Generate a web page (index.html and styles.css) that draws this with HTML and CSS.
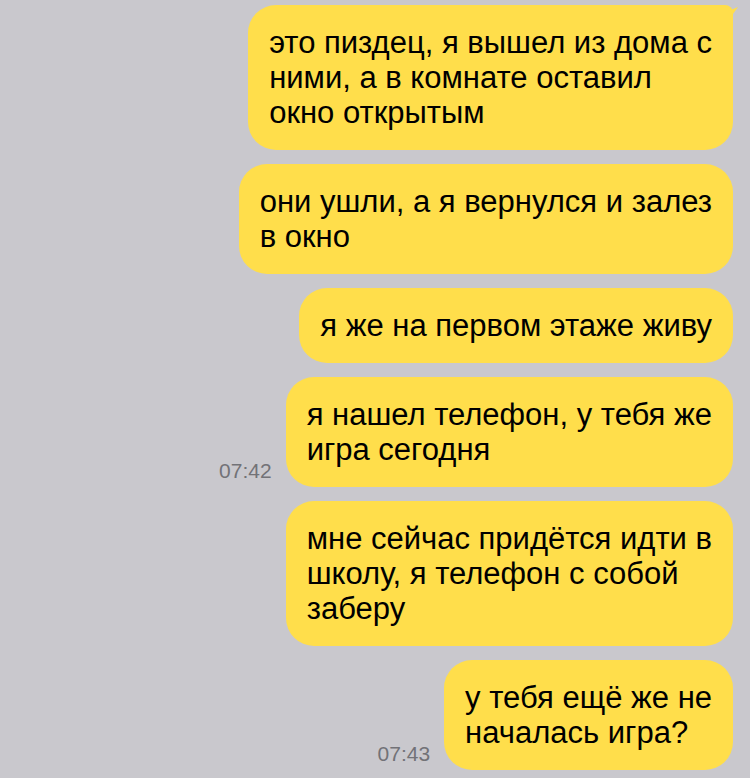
FILE: index.html
```html
<!DOCTYPE html>
<html lang="ru">
<head>
    <meta charset="UTF-8">
    <meta name="viewport" content="width=device-width, initial-scale=1.0">
    <title>Чат</title>
    <link rel="stylesheet" href="styles.css">
</head>
<body>

    <div class="chat">
        <!-- первый пузырь с хвостиком -->
        <div class="row">
            <div class="bubble tail">это пиздец, я вышел из дома с<br>ними, а в комнате оставил<br>окно открытым</div>
        </div>
        <div class="row">
            <div class="bubble">они ушли, а я вернулся и залез<br>в окно</div>
        </div>
        <div class="row">
            <div class="bubble">я же на первом этаже живу</div>
        </div>
        <div class="row">
            <span class="time">07:42</span>
            <div class="bubble">я нашел телефон, у тебя же<br>игра сегодня</div>
        </div>
        <div class="row">
            <div class="bubble">мне сейчас придётся идти в<br>школу, я телефон с собой<br>заберу</div>
        </div>
        <div class="row">
            <span class="time">07:43</span>
            <div class="bubble">у тебя ещё же не<br>началась игра?</div>
        </div>
    </div>

</body>
</html>
```

FILE: styles.css
```css
body {
    margin: 0;
    background-color: #c9c8cd;
    font-family: "Liberation Sans", Arial, sans-serif;
}
.chat {
    display: flex;
    flex-direction: column;
    gap: 14px;
    padding: 5px 17px 0 0;
}
.row {
    display: flex;
    justify-content: flex-end;
    align-items: flex-end;
    gap: 14px;
}
.bubble {
    position: relative;
    background-color: #ffde4b;
    color: #000;
    font-size: 31px;
    line-height: 35px;
    padding: 20px 21px;
    border-radius: 28px;
    white-space: nowrap;
}
.bubble.tail {
    border-top-right-radius: 8px;
}
.bubble.tail::after {
    content: "";
    position: absolute;
    top: 2px;
    right: -5px;
    width: 10px;
    height: 14px;
    background-color: #ffde4b;
    clip-path: polygon(100% 0, 0 30%, 0 100%);
}
.time {
    color: #727277;
    font-size: 21px;
    padding-bottom: 4px;
}
```
